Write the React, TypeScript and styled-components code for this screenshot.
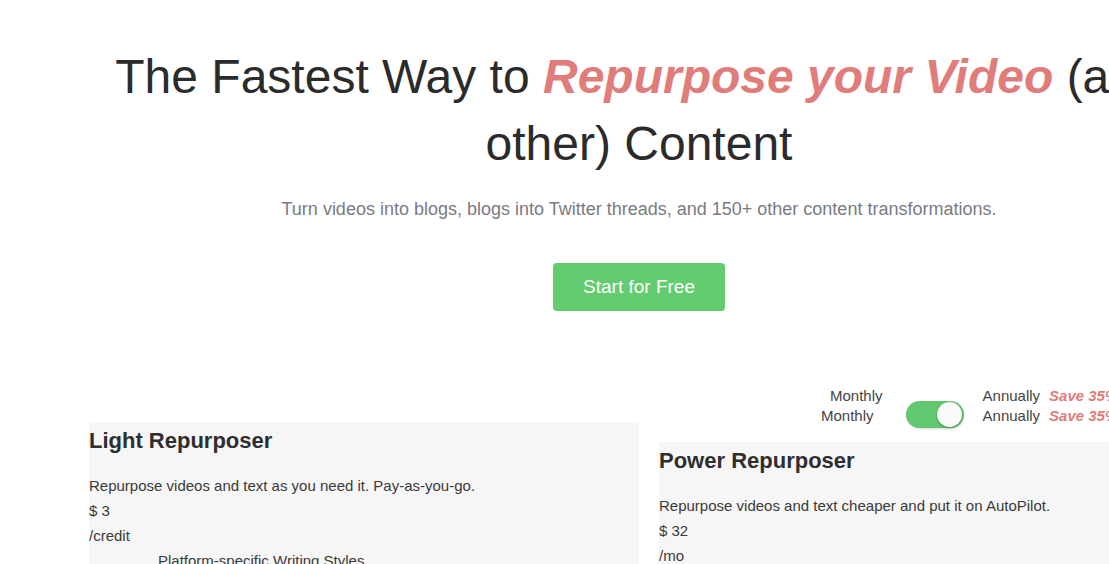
import React, { useState } from "react";
import styled, { createGlobalStyle } from "styled-components";

const GlobalStyle = createGlobalStyle`
  html, body {
    margin: 0;
    padding: 0;
    background: #ffffff;
    overflow: hidden;
  }
  body {
    font-family: "Liberation Sans", Arial, sans-serif;
    color: #333333;
  }
`;

interface IPlan {
  name: string;
  description: string;
  price: string;
  unit: string;
  features: string[];
  offset?: boolean;
}

const plans: IPlan[] = [
  {
    name: "Light Repurposer",
    description: "Repurpose videos and text as you need it. Pay-as-you-go.",
    price: "$ 3",
    unit: "/credit",
    features: ["Platform-specific Writing Styles"],
  },
  {
    name: "Power Repurposer",
    description: "Repurpose videos and text cheaper and put it on AutoPilot.",
    price: "$ 32",
    unit: "/mo",
    features: ["Platform-specific Writing Styles"],
    offset: true,
  },
];

const Toggle = ({ on, onToggle }: { on: boolean; onToggle: () => void }) => (
  <StyledToggle on={on} onClick={onToggle}>
    <Knob on={on} />
  </StyledToggle>
);

const PlanCard = ({ plan }: { plan: IPlan }) => (
  <Card offset={plan.offset}>
    <CardTitle>{plan.name}</CardTitle>
    <CardLine>{plan.description}</CardLine>
    <CardLine>{plan.price}</CardLine>
    <CardLine>{plan.unit}</CardLine>
    {plan.features.map((f) => (
      <Feature key={f}>{f}</Feature>
    ))}
  </Card>
);

export default function App() {
  const [annual, setAnnual] = useState<boolean>(true);

  return (
    <Page>
      <GlobalStyle />
      <Hero>
        <Heading>
          The Fastest Way to <Accent>Repurpose your Video</Accent> (and other) Content
        </Heading>
        <Subtitle>
          Turn videos into blogs, blogs into Twitter threads, and 150+ other content transformations.
        </Subtitle>
        <CtaButton>Start for Free</CtaButton>
      </Hero>

      <Pricing>
        <ToggleBar>
          <LabelStack>
            <Label>Monthly</Label>
            <Label indent>Monthly</Label>
          </LabelStack>
          <Toggle on={annual} onToggle={() => setAnnual(!annual)} />
          <SaveStack>
            <SaveRow>
              <Label>Annually</Label>
              <Save>Save 35%</Save>
            </SaveRow>
            <SaveRow>
              <Label>Annually</Label>
              <Save>Save 35%</Save>
            </SaveRow>
          </SaveStack>
        </ToggleBar>

        <Cards>
          {plans.map((p) => (
            <PlanCard key={p.name} plan={p} />
          ))}
        </Cards>
      </Pricing>
    </Page>
  );
}

const Page = styled.div`
  width: 1278px;
`;

const Hero = styled.section`
  padding-top: 43px;
  text-align: center;
`;

const Heading = styled.h1`
  max-width: 1100px;
  margin: 0 auto;
  font-size: 48px;
  line-height: 67px;
  font-weight: 400;
  color: #2b2b2b;
`;

const Accent = styled.span`
  color: #e07c7a;
  font-weight: 700;
  font-style: italic;
`;

const Subtitle = styled.p`
  margin: 19px 0 0;
  font-size: 18px;
  line-height: 27px;
  color: #7a7a84;
`;

const CtaButton = styled.button`
  margin-top: 40px;
  height: 48px;
  padding: 0 30px;
  border: none;
  border-radius: 4px;
  background: #62cc6f;
  color: #ffffff;
  font-family: "Liberation Sans", Arial, sans-serif;
  font-size: 19px;
  cursor: pointer;
`;

const Pricing = styled.section`
  margin-top: 74px;
  padding-left: 89px;
`;

const ToggleBar = styled.div`
  display: flex;
  align-items: flex-start;
  height: 37px;
  padding-left: 732px;
`;

const LabelStack = styled.div`
  display: flex;
  flex-direction: column;
  align-items: flex-end;
  margin-top: 1px;
`;

const Label = styled.span<{ indent?: boolean }>`
  font-size: 15px;
  line-height: 20px;
  color: #444444;
  margin-right: ${(p) => (p.indent ? "9px" : "0")};
`;

const StyledToggle = styled.div<{ on: boolean }>`
  position: relative;
  box-sizing: border-box;
  width: 58px;
  height: 27px;
  margin: 16px 19px 0 23px;
  border-radius: 14px;
  background: ${(p) => (p.on ? "#62c86f" : "#cccccc")};
  box-shadow: 0 1px 2px rgba(0, 0, 0, 0.15);
  cursor: pointer;
`;

const Knob = styled.div<{ on: boolean }>`
  position: absolute;
  top: 1px;
  left: ${(p) => (p.on ? "31px" : "2px")};
  width: 25px;
  height: 25px;
  border-radius: 50%;
  background: #fafafa;
  box-shadow: 0 1px 3px rgba(0, 0, 0, 0.3);
`;

const SaveStack = styled.div`
  display: flex;
  flex-direction: column;
  margin-top: 1px;
`;

const SaveRow = styled.div`
  display: flex;
  gap: 9px;
  white-space: nowrap;
`;

const Save = styled.span`
  font-size: 15px;
  line-height: 20px;
  font-weight: 700;
  font-style: italic;
  color: #e07c7a;
`;

const Cards = styled.div`
  display: flex;
  align-items: flex-start;
  gap: 20px;
`;

const Card = styled.div<{ offset?: boolean }>`
  flex: 0 0 550px;
  margin-top: ${(p) => (p.offset ? "20px" : "0")};
  padding-top: 5px;
  height: 400px;
  background: #f6f6f6;
`;

const CardTitle = styled.h3`
  margin: 0 0 19px;
  font-size: 22px;
  line-height: 27px;
  font-weight: 700;
  color: #2e2e2e;
`;

const CardLine = styled.p`
  margin: 0;
  font-size: 15px;
  line-height: 25px;
  color: #3a3a3a;
`;

const Feature = styled.div`
  padding-left: 69px;
  font-size: 15px;
  line-height: 25px;
  color: #3a3a3a;
`;
